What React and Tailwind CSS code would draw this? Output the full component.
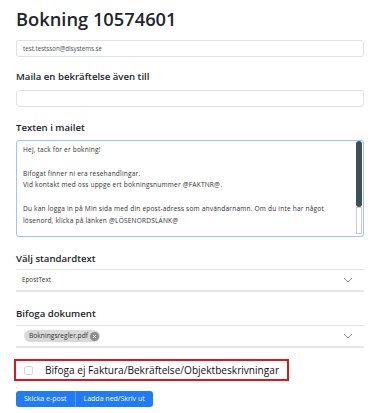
import React from "react";

const font = { fontFamily: '"Open Sans", "Noto Sans", sans-serif' };

function Chevron() {
    return (
        <svg width="10" height="6" viewBox="0 0 10 6" fill="none">
            <path d="M1 1l4 4 4-4" stroke="#8a8a8a" strokeWidth="1" />
        </svg>
    );
}

export default function App() {
    return (
        <div
            className="w-[380px] h-[413px] bg-white px-4 text-[#212529] overflow-hidden"
            style={font}
        >
            <h1 className="pt-[5px] text-[18.3px] leading-[28px] font-semibold">
                Bokning 10574601
            </h1>

            <div className="mt-[7px] h-[17px] border border-[#dee2e6] rounded-[3px] flex items-center pl-[6px] text-[6.2px] text-[#495057]">
                test.testsson@dlsystems.se
            </div>

            <div className="mt-[12px] text-[9.6px] leading-[16px] font-semibold">
                Maila en bekräftelse även till
            </div>
            <div className="mt-[5px] h-[17px] border border-[#dee2e6] rounded-[3px]" />

            <div className="mt-[13px] text-[9.6px] leading-[16px] font-semibold">
                Texten i mailet
            </div>
            <div className="relative mt-[4px] h-[97px] border border-[#9ec5fe] rounded-[3px] pl-[6px] pt-[3px] text-[6.55px] tracking-[0.2px] leading-[11.8px] text-[#333]">
                <p>Hej, tack för er bokning!</p>
                <p>&nbsp;</p>
                <p>Bifogat finner ni era resehandlingar.</p>
                <p>Vid kontakt med oss uppge ert bokningsnummer @FAKTNR@.</p>
                <p>&nbsp;</p>
                <p>
                    Du kan logga in på Min sida med din epost-adress som användarnamn. Om du inte har något
                </p>
                <p>lösenord, klicka på länken @LÖSENORDSLÄNK@</p>
                <div className="absolute right-[1px] top-[0px] w-[6px] h-[66px] rounded-[3px] bg-[#3d4f5a]" />
                <div className="absolute right-[1px] top-[66px] w-[6px] h-[27px] border border-[#ccc] bg-white" />
            </div>

            <div className="mt-[14px] text-[9.6px] leading-[16px] font-semibold">
                Välj standardtext
            </div>
            <div className="mt-[2px] h-[23px] border-t border-b-2 border-[#e6e6e6] flex items-center justify-between pl-[6px] pr-[11px] text-[6.3px] text-[#333]">
                <span>EpostText</span>
                <Chevron />
            </div>

            <div className="mt-[14px] text-[9.6px] leading-[16px] font-semibold">
                Bifoga dokument
            </div>
            <div className="mt-[3px] h-[23px] border-t border-b-2 border-[#e6e6e6] flex items-center justify-between pl-[8px] pr-[11px]">
                <span className="flex items-center h-[12px] rounded-full bg-[#d9d9d9] pl-[5px] pr-[1px] text-[6.7px] text-[#333]">
                    Bokningsregler.pdf
                    <span className="ml-[2px] w-[9px] h-[9px] rounded-full bg-[#8c8c8c] flex items-center justify-center">
                        <svg width="5" height="5" viewBox="0 0 5 5">
                            <path d="M1 1l3 3M4 1L1 4" stroke="#fff" strokeWidth="0.9" />
                        </svg>
                    </span>
                </span>
                <Chevron />
            </div>

            <div className="mt-[11px] -ml-[2px] w-[275px] h-[22px] border-2 border-[#e0161b] flex items-center pl-[8px]">
                <span className="shrink-0 w-[9px] h-[9px] border border-[#d6d6d6] rounded-[2px] bg-white" />
                <span className="ml-[12px] text-[10.1px] leading-[16px] font-medium text-[#111] whitespace-nowrap">
                    Bifoga ej Faktura/Bekräftelse/Objektbeskrivningar
                </span>
            </div>

            <div className="mt-[10px] flex">
                <button className="h-[16px] px-[8px] bg-[#1f7cf6] text-white text-[7px] rounded-l-[3px] border-r border-[#5a9cf8]">
                    Skicka e-post
                </button>
                <button className="h-[16px] px-[8px] bg-[#1f7cf6] text-white text-[7px] rounded-r-[3px]">
                    Ladda ned/Skriv ut
                </button>
            </div>
        </div>
    );
}
